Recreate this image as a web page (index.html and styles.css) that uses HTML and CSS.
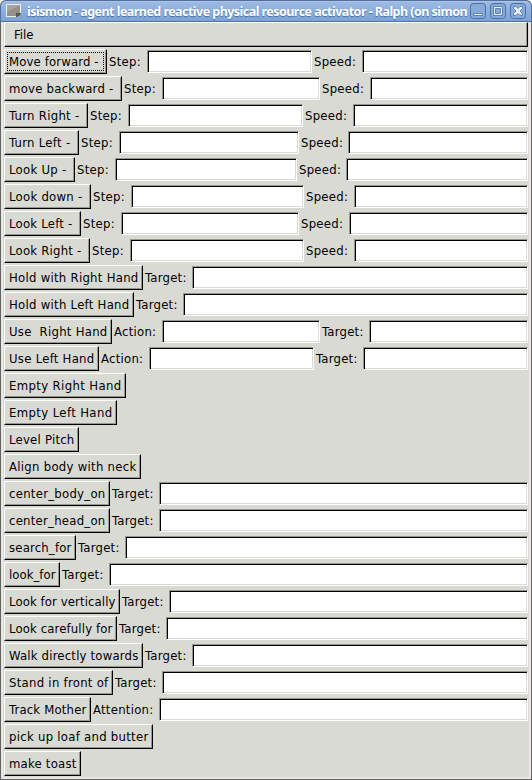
FILE: index.html
```html
<!DOCTYPE html>
<html lang="en">
<head>
<meta charset="utf-8">
<title>isismon</title>
<link rel="stylesheet" href="styles.css">
</head>
<body>
<div class="window">
<header class="titlebar">
<svg class="app-icon" width="16" height="16" viewBox="0 0 16 16"><path d="M0 1H15V10L12 14H0Z" fill="#eee"/><path d="M1 2H14V10H10V13H1Z" fill="#92928b"/><path d="M1 2H14L1 9Z" fill="#a6a59e"/><path d="M10 14V10H15Q14 14 10 14Z" fill="#575855"/></svg>
<h1 class="title"><span id="title-text">isismon - agent learned reactive physical resource activator - Ralph (on simon</span></h1>
<div class="controls">
<svg width="16" height="17" viewBox="0 0 16 17"><rect class="ctl" x=".5" y=".5" width="15" height="15" rx="3"/><path class="mark" d="M3.5 10.5H12.5V12.5H3.5Z"/></svg>
<svg width="16" height="17" viewBox="0 0 16 17"><rect class="ctl" x=".5" y=".5" width="15" height="15" rx="3"/><path class="mark" fill-rule="evenodd" d="M3.5 3.5H12.5V12.5H3.5ZM5.5 5.5V10.5H10.5V5.5Z"/></svg>
<svg width="16" height="17" viewBox="0 0 16 17"><rect class="ctl" x=".5" y=".5" width="15" height="15" rx="3"/><path class="mark" d="M3.5 3.5H6L8 5.5L10 3.5H12.5V5.5L10 8L12.5 10.5V12.5H10L8 10.5L6 12.5H3.5V10.5L6 8L3.5 5.5Z"/></svg>
</div>
</header>
<main class="client">
<nav class="menubar">File</nav>
<div class="rows" id="rows"></div>
</main>
</div>
<script src="rows.js"></script>
</body>
</html>
```
FILE: styles.css
```css
* { box-sizing: border-box; }
body {
  margin: 0;
  width: 532px;
  height: 780px;
  overflow: hidden;
  background: #fff;
  color: #000;
  font: 13px/15px "DejaVu Sans Condensed", "DejaVu Sans", sans-serif;
  font-stretch: condensed;
}
.window { height: 780px; display: flex; flex-direction: column; background: #666260; border-radius: 6px 6px 0 0; overflow: hidden; }
.titlebar {
  height: 22px;
  flex: none;
  display: flex;
  align-items: center;
  padding: 0 5px;
  border: 1px solid #526f9d;
  border-bottom-color: #4f72a6;
  border-radius: 6px 6px 0 0;
  background: linear-gradient(#9dbbe3, #7da3d5);
  box-shadow: inset 0 1px #a9c4e8;
}
.app-icon { flex: none; margin-right: 5px; }
.title {
  margin: 0;
  width: 440px;
  flex: none;
  white-space: nowrap;
  padding-top: 1px;
  font: bold 12.5px/20px "Noto Sans", sans-serif;
  color: #fff;
  text-shadow: 0 1px 1px #486c9f;
}
.controls { display: flex; gap: 4px; margin-left: 3px; padding-top: 1px; }
.controls svg { flex: none; }
.ctl { fill: #88aadb; stroke: #4b6f9f; }
.mark { fill: #e4eefb; stroke: #4b6f9f; stroke-width: .8; }
.client {
  flex: 1;
  margin: 0 1px 1px;
  padding: 0 3px;
  background: #dadad5;
  border-bottom: 2px solid #eae8e5;
  box-shadow: inset 2px 0 #eae8e5, inset -2px 0 #eae8e5;
}
.menubar {
  height: 25px;
  padding: 4px 9px;
  border: 1px solid;
  border-color: #fff #000 #000 #fff;
  box-shadow: inset -1px -1px #989690;
}
.rows { display: flex; flex-direction: column; gap: 2px; padding-top: 2px; }
.row { display: flex; height: 25px; }
.button {
  flex: none;
  height: 25px;
  padding: 4px;
  border: 1px solid;
  border-color: #fff #000 #000 #fff;
  box-shadow: inset -1px -1px #989690;
  background: #dadad5;
  color: #000;
  font: inherit;
  white-space: pre;
  text-align: left;
  outline: 0;
}
.button.focused { outline: 1px dotted #000; outline-offset: -4px; }
.label { flex: none; padding: 5px 0 0 2px; white-space: nowrap; letter-spacing: .25px; }
.entry {
  flex: none;
  height: 23px;
  margin-top: 1px;
  border: 1px solid;
  border-color: #989690 #fff #fff #989690;
  background: #fff;
  box-shadow: inset 1px 1px #000, inset -1px -1px #dadad5;
}
```
FILE: rows.js
```javascript
// Each row: button caption, right edge of the button, then [label, field start, field end].
const LEFT = 4;
const ROWS = [
  ["Move forward - ", 107, ["Step:", 147, 312], ["Speed:", 362, 528]],
  ["move backward - ", 122, ["Step:", 162, 320], ["Speed:", 370, 528]],
  ["Turn Right - ", 88, ["Step:", 128, 303], ["Speed:", 353, 528]],
  ["Turn Left - ", 79, ["Step:", 119, 299], ["Speed:", 348, 528]],
  ["Look Up - ", 75, ["Step:", 115, 297], ["Speed:", 346, 528]],
  ["Look down - ", 91, ["Step:", 131, 304], ["Speed:", 354, 528]],
  ["Look Left - ", 81, ["Step:", 121, 299], ["Speed:", 349, 528]],
  ["Look Right - ", 90, ["Step:", 130, 304], ["Speed:", 354, 528]],
  ["Hold with Right Hand", 143, ["Target:", 192, 528]],
  ["Hold with Left Hand", 134, ["Target:", 183, 528]],
  ["Use  Right Hand", 112, ["Action:", 162, 320], ["Target:", 369, 528]],
  ["Use Left Hand", 99, ["Action:", 149, 314], ["Target:", 363, 528]],
  ["Empty Right Hand", 126],
  ["Empty Left Hand", 117],
  ["Level Pitch", 79],
  ["Align body with neck", 141],
  ["center_body_on", 110, ["Target:", 159, 528]],
  ["center_head_on", 110, ["Target:", 159, 528]],
  ["search_for", 76, ["Target:", 125, 528]],
  ["look_for", 60, ["Target:", 109, 528]],
  ["Look for vertically", 120, ["Target:", 169, 528]],
  ["Look carefully for", 117, ["Target:", 166, 528]],
  ["Walk directly towards", 143, ["Target:", 192, 528]],
  ["Stand in front of", 113, ["Target:", 162, 528]],
  ["Track Mother", 91, ["Attention:", 159, 528]],
  ["pick up loaf and butter", 153],
  ["make toast", 81]
];

function add(parent, tag, className, text, width) {
  const el = document.createElement(tag);
  el.className = className;
  el.textContent = text;
  if (width) el.style.width = width + "px";
  parent.append(el);
  return el;
}

// Spread the letters of an inline element evenly over the given width.
function track(el, width) {
  const natural = el.getBoundingClientRect().width;
  el.style.letterSpacing = (width - natural) / el.textContent.length + "px";
}

const list = document.getElementById("rows");
ROWS.forEach(([caption, edge, ...fields], index) => {
  const row = add(list, "div", "row", "");
  const button = add(row, "button", index === 0 ? "button focused" : "button", "", edge - LEFT);
  track(add(button, "span", "caption", caption), edge - LEFT - 9.5);
  let x = edge;
  for (const [label, start, end] of fields) {
    add(row, "span", "label", label, start - x);
    add(row, "div", "entry", "", end - start);
    x = end;
  }
});
track(document.getElementById("title-text"), 440);
```
